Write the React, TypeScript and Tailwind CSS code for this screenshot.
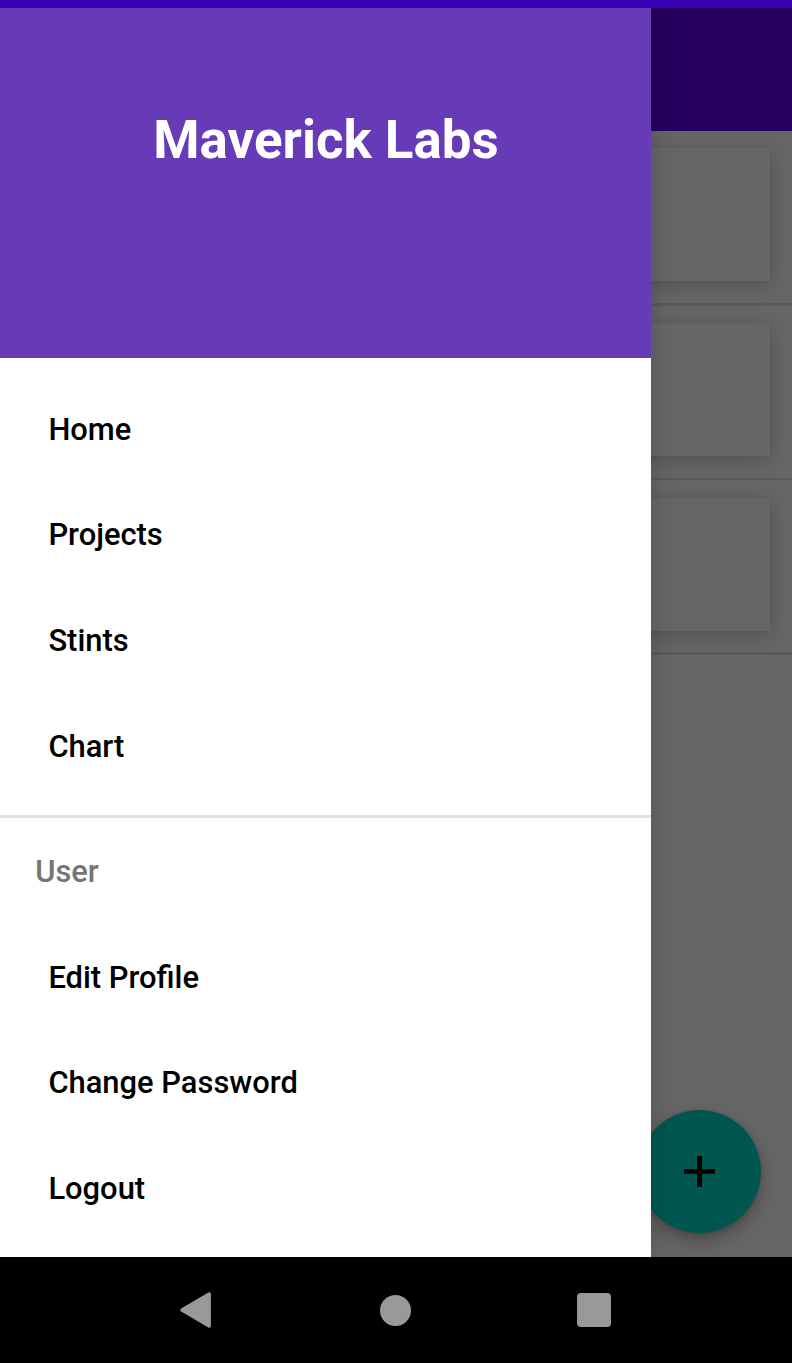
const mainLinks = ["Home", "Projects", "Stints", "Chart"];
const userLinks = ["Edit Profile", "Change Password", "Logout"];

function NavLink({ label }: { label: string }) {
  return (
    <a className="flex h-[105.6px] items-center pl-[48.4px] text-[30.9px] leading-none font-medium text-black">
      {label}
    </a>
  );
}

function ProjectRow() {
  return (
    <div className="flex h-[174.6px] flex-col">
      <div className="mx-[22px] mt-[17.4px] h-[133px] bg-[#666666] shadow-[0_4px_20px_rgba(0,0,0,0.2),0_0_3px_rgba(0,0,0,0.06)]" />
      <div className="mt-auto h-[2.6px] bg-[#5a5a5a]" />
    </div>
  );
}

function Drawer() {
  return (
    <nav className="absolute inset-y-0 left-0 flex w-[651px] flex-col bg-white shadow-[0_0_24px_rgba(0,0,0,0.18)]">
      <header className="flex h-[349.5px] shrink-0 justify-center bg-[#673ab7] pt-[101px] pl-px">
        <h1 className="text-[52.9px] leading-[62px] font-bold text-white">Maverick Labs</h1>
      </header>
      <div className="pt-[20px]">
        {mainLinks.map((label) => (
          <NavLink key={label} label={label} />
        ))}
      </div>
      <div className="mt-[15px] h-[3px] shrink-0 bg-[#e1e1e1]" />
      <h2 className="mt-[1.8px] flex h-[105.6px] shrink-0 items-center pl-[35.2px] text-[30.9px] leading-none font-medium text-[#757575]">
        User
      </h2>
      <div>
        {userLinks.map((label) => (
          <NavLink key={label} label={label} />
        ))}
      </div>
    </nav>
  );
}

export default function App() {
  return (
    <div className="flex h-[1363px] w-[792px] flex-col overflow-hidden bg-black font-['Roboto',sans-serif]">
      <div className="h-2 shrink-0 bg-[#3700b3]" />
      <div className="relative flex h-[1249.4px] shrink-0 flex-col overflow-hidden bg-[#666666]">
        <div className="h-[123px] shrink-0 bg-[#27005f]" />
        <div className="overflow-hidden">
          <ProjectRow />
          <ProjectRow />
          <ProjectRow />
        </div>
        <button className="absolute right-[31px] bottom-[24.4px] flex size-[123px] items-center justify-center rounded-full bg-[#01574f] shadow-[0_7px_18px_rgba(0,0,0,0.28),0_2px_5px_rgba(0,0,0,0.12)]">
          <svg viewBox="0 0 31 31" className="size-[31px]">
            <path d="M13.2 0h4.8v13.2h13v4.6H18V31h-4.8V17.8H0v-4.6h13.2z" fill="#000" />
          </svg>
        </button>
        <Drawer />
      </div>
      <div className="flex flex-1 items-center bg-black pl-[180px]">
        <svg viewBox="0 0 32 36" className="h-[36px] w-[32px]">
          <path
            d="M2 18 29.2 2V34Z"
            fill="#999999"
            stroke="#999999"
            strokeWidth="3.4"
            strokeLinejoin="round"
          />
        </svg>
        <div className="ml-[168.3px] size-[31px] rounded-full bg-[#999999]" />
        <div className="ml-[165.8px] size-[33.5px] rounded-[4px] bg-[#999999]" />
      </div>
    </div>
  );
}
